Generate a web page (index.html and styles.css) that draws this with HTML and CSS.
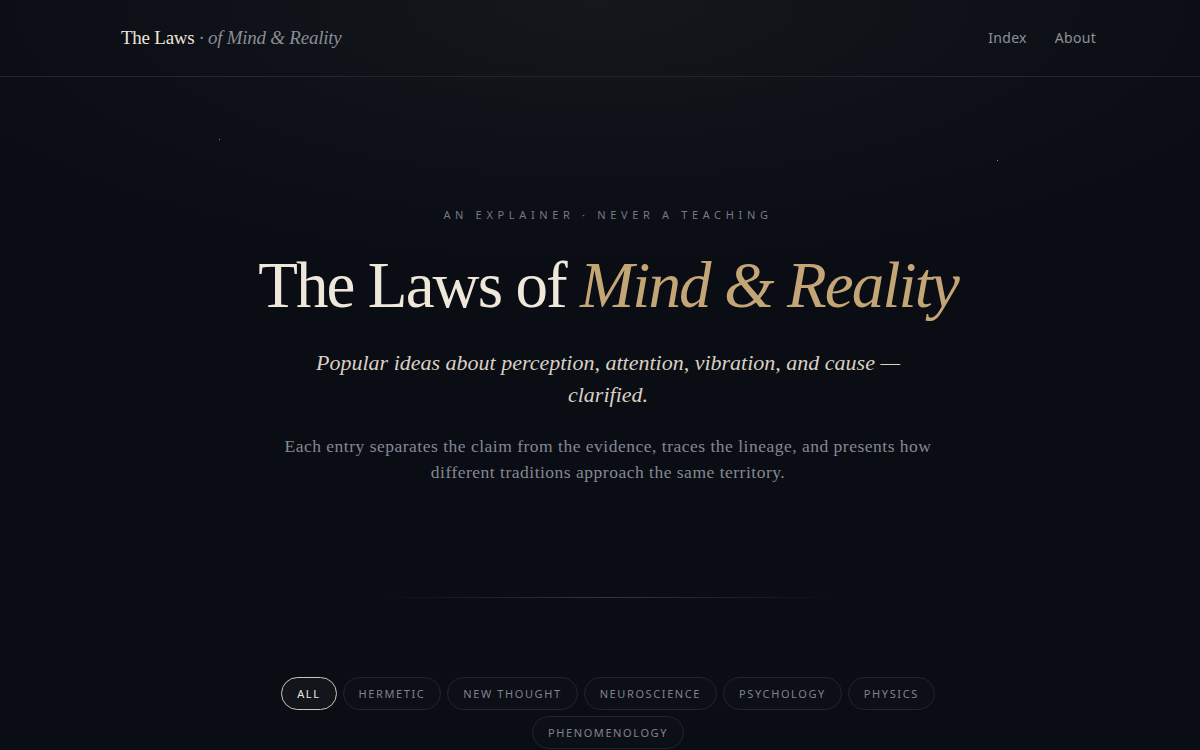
FILE: index.html
```html
<!DOCTYPE html>
<html lang="en">
<head>
<meta charset="utf-8">
<title>The Laws of Mind &amp; Reality</title>
<link rel="stylesheet" href="styles.css">
</head>
<body>
<div class="page">
  <span class="star star-a"></span>
  <span class="star star-b"></span>
  <header class="site-header">
    <div class="header-inner">
      <a class="brand" href="#"><span class="brand-main">The Laws</span><span class="brand-sub"> · of Mind &amp; Reality</span></a>
      <nav class="nav">
        <a href="#">Index</a>
        <a href="#">About</a>
      </nav>
    </div>
  </header>
  <main class="content">
    <section class="hero">
      <p class="eyebrow">An Explainer · Never a Teaching</p>
      <h1 class="title">The Laws of <em>Mind &amp; Reality</em></h1>
      <p class="lede">Popular ideas about perception, attention, vibration, and cause — clarified.</p>
      <p class="desc">Each entry separates the claim from the evidence, traces the lineage, and presents how different traditions approach the same territory.</p>
    </section>
    <div class="divider"></div>
    <div class="filters">
      <button class="chip active">All</button>
      <button class="chip">Hermetic</button>
      <button class="chip">New Thought</button>
      <button class="chip">Neuroscience</button>
      <button class="chip">Psychology</button>
      <button class="chip">Physics</button>
      <button class="chip">Phenomenology</button>
    </div>
  </main>
</div>
</body>
</html>
```
FILE: styles.css
```css
* { box-sizing: border-box; }
html, body { margin: 0; padding: 0; }
body {
  background: #0a0d14;
  color: #e8e2d6;
  font-family: "Liberation Serif", "DejaVu Serif", serif;
  height: 750px;
  overflow: hidden;
}
.page {
  position: relative;
  min-height: 750px;
  padding-left: 16px;
  background: radial-gradient(ellipse 700px 260px at 50% 0, #15171c 0%, #0e1117 55%, #0a0d14 100%);
}
.star {
  position: absolute;
  width: 1px;
  height: 1px;
  background: #8a8f9a;
}
.star-a { left: 219px; top: 139px; }
.star-b { left: 997px; top: 160px; }

.site-header {
  height: 77px;
  margin-left: -16px;
  padding-left: 16px;
  border-bottom: 1px solid #22252c;
}
.header-inner {
  height: 76px;
  padding: 0 104px;
  display: flex;
  align-items: center;
  justify-content: space-between;
}
.brand {
  text-decoration: none;
  font-size: 19px;
  letter-spacing: -0.25px;
  padding-left: 1px;
}
.brand-main { color: #ece6da; }
.brand-sub { color: #8a8d96; font-style: italic; }
.nav { display: flex; gap: 28px; padding-bottom: 2px; }
.nav a {
  font-family: "Noto Sans", "Open Sans", sans-serif;
  font-size: 14px;
  color: #8e919a;
  text-decoration: none;
  letter-spacing: 0.3px;
}

.hero {
  text-align: center;
  padding-top: 130px;
}
.eyebrow {
  margin: 0;
  font-family: "Noto Sans", "Open Sans", sans-serif;
  font-size: 11px;
  letter-spacing: 4.65px;
  text-transform: uppercase;
  color: #767a84;
  line-height: 16px;
}
.title {
  margin: 22px 0 0;
  font-weight: 400;
  font-size: 65px;
  line-height: 80px;
  letter-spacing: -1.9px;
  color: #eee7da;
}
.title em {
  color: #c4a576;
  font-style: italic;
}
.lede {
  margin: 22px auto 0;
  max-width: 620px;
  font-style: italic;
  font-size: 22px;
  line-height: 32px;
  color: #d9d1c2;
}
.desc {
  margin: 22px auto 0;
  max-width: 670px;
  font-size: 17.5px;
  line-height: 26px;
  letter-spacing: 0.5px;
  color: #858893;
}
.divider {
  width: 460px;
  height: 1px;
  margin: 112px auto 0;
  background: linear-gradient(90deg, rgba(60,62,66,0) 0%, #33363a 50%, rgba(60,62,66,0) 100%);
}
.filters {
  margin: 79px auto 0;
  width: 680px;
  display: flex;
  flex-wrap: wrap;
  justify-content: center;
  gap: 6px 6px;
}
.chip {
  height: 33px;
  padding: 0 15px;
  border-radius: 17px;
  border: 1px solid #22252d;
  background: #0c0f16;
  color: #80838d;
  font-family: "Noto Sans", "Open Sans", sans-serif;
  font-size: 11px;
  letter-spacing: 1.6px;
  text-transform: uppercase;
}
.chip.active {
  border-color: #cfc6b4;
  color: #ece8e0;
  background: #12151b;
}
```
